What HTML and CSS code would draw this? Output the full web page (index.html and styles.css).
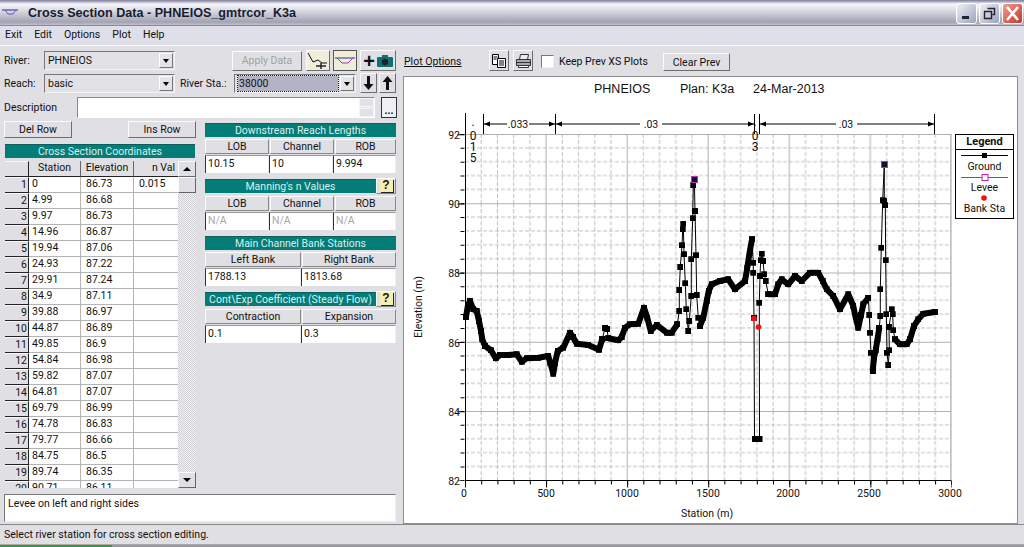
FILE: index.html
```html
<!DOCTYPE html>
<html lang="en">
<head>
<meta charset="utf-8">
<title>Cross Section Data</title>
<link rel="stylesheet" href="styles.css">
</head>
<body>
<div class="window">
  <header class="titlebar">
    <svg class="app-icon" width="16" height="10" viewBox="0 0 16 10"><path d="M0 3H16" stroke="#2a2a90"/><path d="M3 3L6 7H11L14 3" fill="none" stroke="#5a5ac0"/></svg>
    <span class="title">Cross Section Data - PHNEIOS_gmtrcor_K3a</span>
    <div class="win-btns">
      <span class="win-btn"><svg width="21" height="21" viewBox="0 0 21 21"><rect x="6" y="13" width="7" height="3" fill="#223"/></svg></span>
      <span class="win-btn"><svg width="21" height="21" viewBox="0 0 21 21"><path d="M8.500 5.500h7v6h-2M5.500 8.500h7v7h-7z" fill="none" stroke="#223" stroke-width="1.400"/></svg></span>
      <span class="win-btn close"><svg width="21" height="21" viewBox="0 0 21 21"><path d="M5 4L16 17M16 4L5 17" stroke="#fff" stroke-width="2.600"/></svg></span>
    </div>
  </header>
  <nav class="menubar"><span>Exit</span><span>Edit</span><span>Options</span><span>Plot</span><span>Help</span></nav>
  <main class="main">
    <section class="left">
      <div class="form-row r1">
        <label class="lbl l-river">River:</label>
        <div class="combo c-main"><span>PHNEIOS</span><i class="drop"></i></div>
        <button class="btn apply">Apply Data</button>
        <button class="btn tool"><svg width="22" height="18" viewBox="0 0 22 18"><path d="M1 1L6 10L11 8L15 11L20 11" fill="none" stroke="#111"/><path d="M9 14H19M14 11V17" stroke="#223" stroke-width="1.500"/></svg></button>
        <button class="btn tool pressed"><svg width="22" height="16" viewBox="0 0 22 16"><path d="M1 5H21" stroke="#3030a0"/><path d="M3 5L8 10H14L19 5" fill="none" stroke="#9040b0"/></svg></button>
        <button class="btn cam"><b class="plus">+</b><svg width="16" height="12" viewBox="0 0 16 12"><rect y="2" width="16" height="10" rx="1" fill="#0f7270"/><rect x="5" width="6" height="3" fill="#0f7270"/><circle cx="8" cy="7" r="3.200" fill="#222"/></svg></button>
      </div>
      <div class="form-row r2">
        <label class="lbl l-river">Reach:</label>
        <div class="combo c-main"><span>basic</span><i class="drop"></i></div>
        <label class="lbl l-sta">River Sta.:</label>
        <div class="combo c-sta"><span class="focus">38000</span><i class="drop"></i></div>
        <button class="btn arrow"><svg width="11" height="14" viewBox="0 0 11 14"><path d="M4 0h3v8h3.500L5.500 14L.5 8H4z" fill="#111"/></svg></button>
        <button class="btn arrow"><svg width="11" height="14" viewBox="0 0 11 14"><path d="M4 14h3V6h3.500L5.500 0L.5 6H4z" fill="#111"/></svg></button>
      </div>
      <div class="form-row r3">
        <label class="lbl l-desc">Description</label>
        <div class="desc"><span class="spin"><i></i><i></i></span></div>
        <button class="btn dots">...</button>
      </div>
      <div class="columns">
        <div class="col-table">
          <div class="row-btns"><button class="btn rowbtn">Del Row</button><button class="btn rowbtn">Ins Row</button></div>
          <div class="teal t-coord">Cross Section Coordinates</div>
          <div class="grid-wrap">
            <div class="grid-clip">
              <table class="grid">
                <thead><tr><th></th><th class="ctr">Station</th><th class="ctr">Elevation</th><th class="rgt">n Val</th></tr></thead>
                <tbody>
                  <tr><th>1</th><td>0</td><td>86.73</td><td>0.015</td></tr>
                  <tr><th>2</th><td>4.99</td><td>86.68</td><td></td></tr>
                  <tr><th>3</th><td>9.97</td><td>86.73</td><td></td></tr>
                  <tr><th>4</th><td>14.96</td><td>86.87</td><td></td></tr>
                  <tr><th>5</th><td>19.94</td><td>87.06</td><td></td></tr>
                  <tr><th>6</th><td>24.93</td><td>87.22</td><td></td></tr>
                  <tr><th>7</th><td>29.91</td><td>87.24</td><td></td></tr>
                  <tr><th>8</th><td>34.9</td><td>87.11</td><td></td></tr>
                  <tr><th>9</th><td>39.88</td><td>86.97</td><td></td></tr>
                  <tr><th>10</th><td>44.87</td><td>86.89</td><td></td></tr>
                  <tr><th>11</th><td>49.85</td><td>86.9</td><td></td></tr>
                  <tr><th>12</th><td>54.84</td><td>86.98</td><td></td></tr>
                  <tr><th>13</th><td>59.82</td><td>87.07</td><td></td></tr>
                  <tr><th>14</th><td>64.81</td><td>87.07</td><td></td></tr>
                  <tr><th>15</th><td>69.79</td><td>86.99</td><td></td></tr>
                  <tr><th>16</th><td>74.78</td><td>86.83</td><td></td></tr>
                  <tr><th>17</th><td>79.77</td><td>86.66</td><td></td></tr>
                  <tr><th>18</th><td>84.75</td><td>86.5</td><td></td></tr>
                  <tr><th>19</th><td>89.74</td><td>86.35</td><td></td></tr>
                  <tr><th>20</th><td>90.71</td><td>86.11</td><td></td></tr>
                </tbody>
              </table>
            </div>
            <div class="vscroll">
              <span class="sb-btn"><i class="up"></i></span>
              <span class="sb-btn thumb"></span>
              <span class="sb-track"></span>
              <span class="sb-btn"><i class="down"></i></span>
            </div>
          </div>
        </div>
        <div class="col-side">
          <div class="block b1">
            <div class="teal">Downstream Reach Lengths</div>
            <div class="heads three"><span>LOB</span><span>Channel</span><span>ROB</span></div>
            <div class="inputs three"><span>10.15</span><span>10</span><span>9.994</span></div>
          </div>
          <div class="block b2">
            <div class="head-help"><div class="teal">Manning's n Values</div><span class="help"><span class="help-note">?</span></span></div>
            <div class="heads three"><span>LOB</span><span>Channel</span><span>ROB</span></div>
            <div class="inputs three off"><span>N/A</span><span>N/A</span><span>N/A</span></div>
          </div>
          <div class="block b3">
            <div class="teal">Main Channel Bank Stations</div>
            <div class="heads two"><span>Left Bank</span><span>Right Bank</span></div>
            <div class="inputs two"><span>1788.13</span><span>1813.68</span></div>
          </div>
          <div class="block b4">
            <div class="head-help"><div class="teal">Cont\Exp Coefficient (Steady Flow)</div><span class="help"><span class="help-note">?</span></span></div>
            <div class="heads two"><span>Contraction</span><span>Expansion</span></div>
            <div class="inputs two"><span>0.1</span><span>0.3</span></div>
          </div>
        </div>
      </div>
      <div class="note">Levee on left and right sides</div>
    </section>
    <section class="right">
      <div class="plot-tools">
        <span class="plot-opts">Plot Options</span>
        <button class="btn ico"><svg width="16" height="16" viewBox="0 0 16 16"><path d="M1.500 1.500h6v10h-6z" fill="#fff" stroke="#000"/><path d="M6.500 5.500h8v9h-8z" fill="#fff" stroke="#000"/><path d="M2.500 4h4M2.500 6h3M8 8h5M8 10h5M8 12h5" stroke="#000"/></svg></button>
        <button class="btn ico"><svg width="17" height="16" viewBox="0 0 17 16"><path d="M5.500 1.500h8l-1 5h-8z" fill="#eee" stroke="#333"/><path d="M1.500 6.500h14v6h-14z" fill="#aaa" stroke="#333"/><path d="M1.500 9.500h14" stroke="#333"/><path d="M3.500 12.500h10v2h-10z" fill="#fff" stroke="#333"/></svg></button>
        <span class="check"></span>
        <span class="keep">Keep Prev XS Plots</span>
        <button class="btn clear">Clear Prev</button>
      </div>
      <div class="plot">
        <svg class="chart" width="613" height="446" viewBox="404 76 613 446">
          <defs>
            <pattern id="gridcell" patternUnits="userSpaceOnUse" x="465" y="133" width="486.400" height="69.260">
              <path class="minor" d="M16.210 0V70M32.430 0V70M48.640 0V70M64.860 0V70M97.280 0V70M113.500 0V70M129.700 0V70M145.900 0V70M178.400 0V70M194.600 0V70M210.800 0V70M227 0V70M259.400 0V70M275.600 0V70M291.900 0V70M308.100 0V70M340.500 0V70M356.700 0V70M372.900 0V70M389.100 0V70M421.600 0V70M437.800 0V70M454 0V70M470.200 0V70"/>
              <path class="minor" d="M0 13.850H487M0 27.700H487M0 41.550H487M0 55.400H487"/>
              <path class="major" d="M81.070 0V70M162.130 0V70M243.200 0V70M324.270 0V70M405.330 0V70M486 0V70M0 .5H487"/>
            </pattern>
            <marker id="sq" viewBox="0 0 6 6" refX="3" refY="3" markerWidth="6" markerHeight="6" markerUnits="userSpaceOnUse"><rect width="6" height="6" fill="#000"/></marker>
          </defs>

          <text class="t plot-title" x="594" y="92">PHNEIOS</text>
          <text class="t plot-title" x="680" y="92">Plan: K3a</text>
          <text class="t plot-title" x="753" y="92">24-Mar-2013</text>

          <path class="thin" d="M483.500 113V133M555.500 113V133M754.500 113V133M759.500 113V133M934.500 113V133M465.500 112V133"/>
          <path class="thin" d="M484 123H507M529 123H555M556 123H640M662 123H754M760 123H836M857 123H934"/>
          <path d="M484 123l6-2.500v5zM555 123l-6-2.500v5zM556 123l6-2.500v5zM754 123l-6-2.500v5zM760 123l6-2.500v5zM934 123l-6-2.500v5z" fill="#000"/>
          <text class="t mid" x="518" y="127">.033</text>
          <text class="t mid" x="651" y="127">.03</text>
          <text class="t mid" x="846" y="127">.03</text>

          <rect x="465" y="133" width="486.400" height="346.300" fill="url(#gridcell)"/>
          <path class="major" d="M951 133V479"/>
          <path class="axis" d="M465.500 133V479.500H951"/>
          <path class="xticks" d="M465 481.500H952"/>
          <path class="xmajor" d="M465 483H952"/>
          <path class="yticks" d="M462.500 133V480"/>
          <path class="ymajor" d="M461 133.300V480"/>

          <text class="t stack mid"><tspan x="473" y="125">.</tspan><tspan x="473" y="139">0</tspan><tspan x="473" y="150">1</tspan><tspan x="473" y="161">5</tspan></text>
          <text class="t stack mid"><tspan x="755" y="125">.</tspan><tspan x="755" y="139">0</tspan><tspan x="755" y="150">3</tspan></text>

          <text class="t end" x="460" y="138">92</text>
          <text class="t end" x="460" y="207">90</text>
          <text class="t end" x="460" y="276">88</text>
          <text class="t end" x="460" y="346">86</text>
          <text class="t end" x="460" y="415">84</text>
          <text class="t end" x="460" y="484">82</text>
          <text class="t mid" x="464" y="496">0</text>
          <text class="t mid" x="546" y="496">500</text>
          <text class="t mid" x="627" y="496">1000</text>
          <text class="t mid" x="708" y="496">1500</text>
          <text class="t mid" x="788" y="496">2000</text>
          <text class="t mid" x="869" y="496">2500</text>
          <text class="t mid" x="950" y="496">3000</text>
          <text class="t mid" x="707" y="516">Station (m)</text>
          <text class="t mid" transform="translate(422 306) rotate(-90)">Elevation (m)</text>

          <polyline class="ground-thick" points="466,316 468,304 470,300 473.300,308.300 476.700,310 479,320 481,330 482.300,338.300 485,345 491,349.300 495.700,357.300 500,354 508.300,354 516.700,353.300 521.700,360.700 526.700,357.300 538.300,356.700 548.300,355 550.300,362 553.300,372.700 555,362 557.700,350 563.300,346.700 570,331.700 573,336 576.700,342.700 588.300,344 599,348.700 602.300,338"/>
          <polyline class="ground-thin" points="602.300,338 605,327 607,328 608.300,337.300"/>
          <polyline class="ground-thick" points="608.300,337.300 618.300,339.300 621.700,336 625,326.700 630,323.300 638.300,322.700 644,306.700 647.300,316.700 650.700,330 656.700,324 666.700,331.700 671.700,331.700 677.300,323.300"/>
          <polyline class="ground-thin" points="677.300,323.300 679.300,310 679.300,289 680.300,266 682,244.300 682.700,228.300 683.300,222.700 684,253.300 685.300,282.300 686.300,308.300 688.300,330 689.300,320 691.300,295 691.300,258.300 692.700,217.300 693.300,184 694.300,178.300 695,210 696,254.300 696.700,294 698.300,316.700 700,325"/>
          <polyline class="ground-thick" points="700,325 703.300,316.700 706.700,300 708.700,290 711.700,283.300 720,280 728.300,278.300 735,288.300 745,280 747.300,266.700 749.500,252 752,238.300"/>
          <polyline class="ground-thin" points="752,238.300 753.300,261.700 753.300,271.700 754,316.700 754.500,438 759.500,438 759.300,301.700 760,275 760.700,259.300 761.700,252.700 763,260 764.300,273.300 765.700,280 768.300,293.300"/>
          <polyline class="ground-thick" points="768.300,293.300 775,293.300 778.300,283.300 781.700,278.300 788.300,283.300 795,275 801.700,280 810,271.700 818.300,271.700 822.700,280 826.700,288.300 833.300,295 840,308.300 848.300,293.300 853.300,305 855.500,316 858.300,326.700 861,314 863.300,303.300 868.300,296.700"/>
          <polyline class="ground-thin" points="868.300,296.700 869.300,314 870,331.700 871,351.700 872.700,370"/>
          <polyline class="ground-thick" points="872.700,370 874,356.700 875.700,349.300 877.500,338 879.300,326.700"/>
          <polyline class="ground-thin" points="879.300,326.700 880.300,315 880.300,288.300 881.300,246.700 882.700,199.300 884.300,163.300 884.300,200 885.300,204.300 885.700,259.300 886.300,313.300 887,351.700 888.300,364 889.300,349.300 889,326 891.700,308.300 892.700,313.300 893.300,329.300 895,338.300"/>
          <polyline class="ground-thick" points="895,338.300 900,343.300 906.700,343.300 910,338.300 914,325 918.300,318.300 923.300,312.700 935,311"/>
          <rect class="thick-end" x="752" y="435" width="10" height="6"/>
          <rect class="levee" x="691.500" y="175.500" width="6" height="6"/>
          <rect class="levee" x="881.500" y="160.500" width="6" height="6"/>
          <circle class="bank" cx="754" cy="317.500" r="2.800"/>
          <circle class="bank" cx="758.500" cy="326" r="2.800"/>

          <rect class="legend" x="955.500" y="133.500" width="58" height="84"/>
          <path class="thin" d="M956 148.500H1013"/>
          <text class="t legend-title mid" x="984.500" y="144">Legend</text>
          <path class="thin" d="M961 154.500H1008"/>
          <rect x="982" y="152" width="5" height="5" fill="#000"/>
          <text class="t mid" x="984.500" y="169">Ground</text>
          <path class="levee-line" d="M961 176.500H1008"/>
          <rect class="levee-key" x="982" y="173.500" width="6" height="6"/>
          <text class="t mid" x="984.500" y="190">Levee</text>
          <circle class="bank" cx="984" cy="197" r="2.800"/>
          <text class="t mid" x="984.500" y="211">Bank Sta</text>
        </svg>
      </div>
    </section>
  </main>
  <footer class="status">Select river station for cross section editing.</footer>
  <div class="taskbar"><span class="start"></span></div>
</div>
</body>
</html>
```
FILE: styles.css
```css
* { box-sizing: border-box; }
html, body { margin: 0; padding: 0; }
body { width: 1024px; height: 547px; overflow: hidden; background: #dfdfe4; font: 10.500px Roboto, "Liberation Sans", sans-serif; color: #111; }
.window { width: 1024px; height: 547px; display: flex; flex-direction: column; }
.titlebar { height: 26px; flex: none; display: flex; align-items: center; padding: 0 1px 0 2px; border-top: 1px solid #8b8ba6; border-bottom: 1px solid #8a8a98; background: linear-gradient(#9a9ab0 0, #f6f6fa 3px, #d8d8e2 10px, #a3a3b4 21px, #c8c8d4 25px); }
.app-icon { flex: none; margin-right: 10px; margin-top: -3px; }
.title { font: bold 12.600px "Liberation Sans", sans-serif; color: #16202e; flex: 1; }
.win-btns { display: flex; gap: 2px; }
.win-btn { width: 21px; height: 21px; border-radius: 3px; border: 1px solid #fff; background: linear-gradient(135deg, #f0f0f5, #9ca4bc); display: block; }
.win-btn svg { display: block; margin: -1px; }
.win-btn.close { background: linear-gradient(135deg, #f0a090, #c03828); }
.menubar { height: 20px; flex: none; display: flex; gap: 12px; padding: 2px 0 0 5px; border-bottom: 1px solid #fafafa; background: #dfdfe9; }
.main { flex: 1; min-height: 0; display: flex; }
.left { width: 404px; flex: none; padding: 4px 0 0 4px; display: flex; flex-direction: column; }
.right { flex: 1; min-width: 0; display: flex; flex-direction: column; padding-top: 1px; }
.btn { padding: 0; font: inherit; color: #111; background: #e0e0e4; border: 1px solid; border-color: #fbfbfb #6e6e6e #6e6e6e #fbfbfb; display: flex; align-items: center; justify-content: center; }
.form-row { display: flex; align-items: center; }
.r1 { height: 21px; }
.r2 { height: 21px; margin-top: 2px; }
.r3 { height: 22px; margin-top: 3px; }
.lbl { display: block; flex: none; white-space: nowrap; }
.l-river { width: 40px; }
.l-sta { width: 54px; margin-left: 5px; }
.l-desc { width: 73px; }
.combo { height: 19px; flex: none; display: flex; align-items: center; justify-content: space-between; padding: 0 1px 0 3px; background: #e2e2e6; border: 1px solid; border-color: #777 #f4f4f4 #f4f4f4 #777; }
.c-main { width: 131px; }
.c-sta { width: 122px; margin-right: 4px; background: #e2e2e6; }
.focus { background: #b3b3c6; outline: 1px dotted #222; padding: 0 1px; flex: 1; margin-right: 2px; height: 15px; line-height: 15px; }
.drop { width: 14px; height: 15px; position: relative; display: block; flex: none; background: #e4e4e8; border: 1px solid; border-color: #fff #777 #777 #fff; }
.drop::after { content: ""; position: absolute; left: 3px; top: 5px; border: 3.500px solid transparent; border-top: 4px solid #000; border-bottom: 0; }
.apply { width: 70px; height: 20px; margin-left: 57px; color: #a0a0a0; }
.tool { width: 24px; height: 21px; margin-left: 4px; background: #efeed8; }
.tool.pressed { margin-left: 3px; border: 1px solid #555; }
.cam { width: 36px; height: 21px; margin-left: 3px; gap: 2px; }
.plus { font: bold 20px/16px "Liberation Sans", sans-serif; }
.arrow { width: 17px; height: 20px; margin-right: 2px; }
.desc { width: 298px; height: 21px; background: #fff; position: relative; border: 1px solid; border-color: #888 #fff #fff #888; }
.spin { position: absolute; right: 0; top: 0; width: 15px; height: 19px; display: flex; flex-direction: column; gap: 1px; background: #e8e8e8; }
.spin i { flex: 1; background: #e2e2e6; border: 1px solid #f4f4f4; }
.dots { width: 16px; height: 21px; margin-left: 6px; border-color: #333; align-items: flex-end; font-weight: bold; background: #f0f0f4; }
.columns { display: flex; margin-top: 3px; }
.col-table { width: 192px; flex: none; }
.col-side { width: 191px; flex: none; margin-left: 9px; }
.row-btns { display: flex; justify-content: space-between; }
.rowbtn { width: 68px; height: 17px; }
.teal { background: #047c78; color: #dcefec; text-align: center; height: 14px; line-height: 14px; border-top: 1px solid #0b5e5c; white-space: nowrap; overflow: hidden; }
.t-coord { margin: 6px 0 3px 1px; width: 190px; }
.grid-wrap { display: flex; width: 191px; height: 327px; margin-left: 1px; }
.grid-clip { width: 173px; height: 327px; overflow: hidden; background: #fff; }
.grid { border-collapse: separate; border-spacing: 0; table-layout: fixed; width: 173px; }
.grid tr { height: 16px; }
.grid th, .grid td { padding: 0 3px; height: 16px; font-weight: normal; overflow: hidden; white-space: nowrap; line-height: 14px; }
.grid th:first-child { width: 24px; text-align: right; background: #e0e0e4; border-right: 1px solid #222; border-bottom: 1px solid #222; border-top: 1px solid #f8f8f8; padding: 0 1px 0 0; }
.grid td { text-align: left; padding-left: 5px; border-right: 1px solid #b4b4b4; border-bottom: 1px solid #b4b4b4; }
.grid td:nth-child(2) { padding-left: 3px; }
.grid td:last-child { border-right: 0; }
.grid thead th { background: #e0e0e4; border-right: 1px solid #666; border-bottom: 1px solid #222; height: 16px; }
.grid thead th:nth-child(2) { width: 52px; }
.grid thead th:nth-child(3) { width: 53px; }
.ctr { text-align: center; }
.rgt { text-align: right; }
.grid thead th.rgt { border-right: 0; }
.vscroll { width: 18px; height: 327px; display: flex; flex-direction: column; margin-left: 0; background: #e8e8ec; }
.sb-btn { display: block; height: 16px; flex: none; position: relative; background: #e0e0e4; border: 1px solid; border-color: #fbfbfb #666 #666 #fbfbfb; }
.sb-track { flex: 1; background: repeating-conic-gradient(#cfcfd2 0 25%, #f4f4f6 0 50%) 0 0 / 2px 2px; }
.up, .down { position: absolute; left: 4px; top: 5px; border: 4px solid transparent; }
.up { border-bottom: 4px solid #000; border-top: 0; }
.down { border-top: 4px solid #000; border-bottom: 0; }
.block { width: 191px; }
.b1 { margin-top: 2px; }
.b2 { margin-top: 6px; }
.b3 { margin-top: 6px; }
.b4 { margin-top: 6px; }
.head-help { display: flex; }
.head-help .teal { flex: 1; }
.help { width: 20px; height: 16px; flex: none; margin-top: -1px; display: flex; align-items: center; justify-content: center; background: #e0e0e4; border: 1px solid; border-color: #fff #888 #888 #fff; }
.help-note { width: 13px; height: 13px; font: bold 12px/12px "Liberation Sans", sans-serif; text-align: center; color: #221800; background: #f4efb4; box-shadow: 1px 1px 0 #222; }
.heads { display: grid; height: 15px; margin-top: 2px; gap: 1px; text-align: center; }
.heads span { background: #e0e0e4; border: 1px solid; border-color: #fbfbfb #888 #888 #fbfbfb; line-height: 13px; }
.inputs { display: grid; height: 18px; margin-top: 1px; background: #fff; }
.inputs span { padding-left: 2px; line-height: 16px; border-left: 1px solid #333; border-top: 1px solid #999; border-right: 1px solid #eee; }
.three { grid-template-columns: 64px 64px 1fr; }
.two { grid-template-columns: 96px 1fr; }
.off { color: #a8a8a8; }
.note { margin-top: 6px; width: 392px; height: 29px; padding: 2px 3px; background: #fff; border: 1px solid; border-color: #777 #eee #eee #777; }
.plot-tools { height: 30px; flex: none; display: flex; align-items: center; }
.plot-opts { width: 85px; text-decoration: underline; margin-top: -2px; white-space: nowrap; }
.ico { width: 20px; height: 21px; margin-right: 4px; margin-top: -3px; }
.check { width: 13px; height: 13px; margin-left: 4px; background: #fff; border: 1px solid; border-color: #777 #eee #eee #777; margin-top: -2px; flex: none; }
.keep { width: 104px; margin-left: 5px; margin-top: -2px; white-space: nowrap; }
.clear { width: 67px; height: 18px; }
.plot { width: 613px; height: 446px; background: #fff; box-shadow: 0 0 0 1px #8f8f8f; }
.chart { display: block; }
.t { font: 10.500px Roboto, "Liberation Sans", sans-serif; fill: #111; }
.plot-title { font: 12.500px "Liberation Sans", sans-serif; }
.stack { font-size: 12px; }
.mid { text-anchor: middle; }
.end { text-anchor: end; }
.legend-title { font-weight: bold; font-size: 11px; }
.thin { fill: none; stroke: #000; stroke-width: 1; }
.axis { fill: none; stroke: #000; stroke-width: 1; }
.minor { fill: none; stroke: #bdbdbd; stroke-width: 1; stroke-dasharray: 4 2; }
.major { fill: none; stroke: #b0b0b0; stroke-width: 1; }
.xticks { stroke: #000; stroke-width: 4; stroke-dasharray: 1 15.210; fill: none; }
.xmajor { stroke: #000; stroke-width: 7; stroke-dasharray: 1 80.070; fill: none; }
.yticks { stroke: #000; stroke-width: 4; stroke-dasharray: 1 12.850; fill: none; }
.ymajor { stroke: #000; stroke-width: 7; stroke-dasharray: 1 68.260; fill: none; }
.ground-thick { fill: none; stroke: #000; stroke-width: 6; stroke-linejoin: round; marker-start: url(#sq); marker-mid: url(#sq); marker-end: url(#sq); }
.ground-thin { fill: none; stroke: #000; stroke-width: 1; marker-start: url(#sq); marker-mid: url(#sq); marker-end: url(#sq); }
.thick-end { fill: #000; }
.levee { fill: #101030; stroke: #c030c0; stroke-width: 1; }
.bank { fill: #f01010; }
.legend { fill: #fff; stroke: #000; stroke-width: 1; }
.levee-line { stroke: #c020c0; stroke-width: 1; fill: none; }
.levee-key { fill: #fff; stroke: #c020c0; stroke-width: 1; }
.status { height: 21px; flex: none; margin-top: 2px; padding: 3px 0 0 4px; line-height: 14px; border-top: 1px solid #888; border-bottom: 1px solid #aaa; }
.taskbar { height: 2px; flex: none; background: #9a9aa0; }
.start { display: block; width: 112px; height: 2px; background: #2f9b3a; }
```
